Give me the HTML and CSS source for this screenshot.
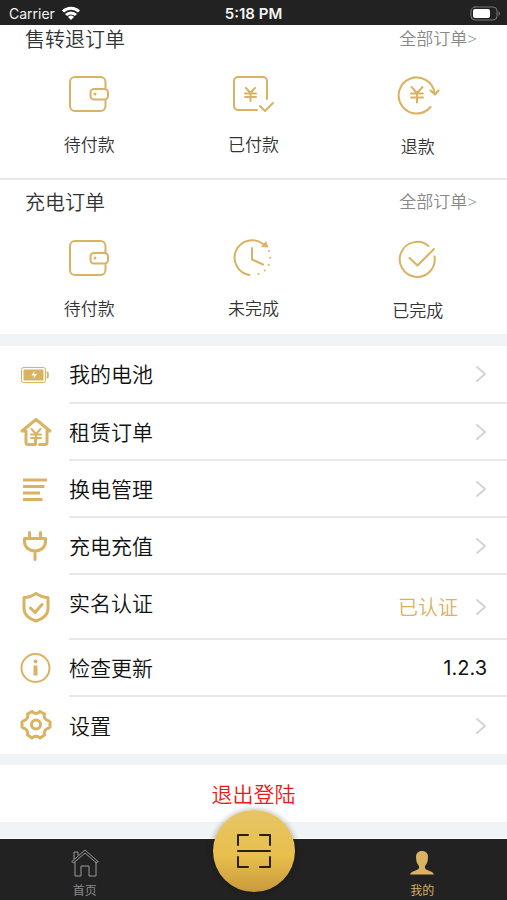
FILE: index.html
```html
<!DOCTYPE html>
<html lang="zh-CN">
<head>
<meta charset="utf-8">
<meta name="viewport" content="width=device-width, initial-scale=1">
<title>我的</title>
<link rel="stylesheet" href="styles.css">
</head>
<body>
<svg class="defs" aria-hidden="true">
  <symbol id="wallet" viewBox="0 0 44 44">
    <path d="M38.500 15V9a5 5 0 0 0-5-5H8a5 5 0 0 0-5 5v24a5 5 0 0 0 5 5h25.500a5 5 0 0 0 5-5v-5"/>
    <rect x="23.500" y="16" width="17.500" height="10.500" rx="3.500"/>
    <circle cx="28" cy="21" r="1.500" class="solid"/>
  </symbol>
  <symbol id="chevron" viewBox="0 0 12 18"><path d="M2 2l8 7-8 7"/></symbol>
</svg>

<header class="status">
  <div class="carrier">
    <span>Carrier</span>
    <svg class="wifi" viewBox="0 0 20 15" aria-hidden="true">
      <path d="M2 5.500a11.500 11.500 0 0 1 16 0M5 9a7 7 0 0 1 10 0"/>
      <path class="dot" d="M10 14l-3-3a4.300 4.300 0 0 1 6 0z"/>
    </svg>
  </div>
  <time class="clock">5:18 PM</time>
  <div class="power">
    <svg viewBox="0 0 32 16" aria-hidden="true">
      <rect class="shell" x="1" y="1" width="26" height="13" rx="4"/>
      <rect class="charge" x="3" y="3" width="17" height="9" rx="2"/>
      <path class="tip" d="M28.500 5a3 3 0 0 1 0 5z"/>
    </svg>
  </div>
</header>

<main>
  <section class="orders">
    <div class="orders-head">
      <h2>售转退订单</h2>
      <a href="#">全部订单<span class="gt">&gt;</span></a>
    </div>
    <div class="orders-grid">
      <a href="#"><svg class="line-icon"><use href="#wallet"/></svg><span>待付款</span></a>
      <a href="#">
        <svg class="line-icon" viewBox="0 0 44 44">
          <path d="M36 26V8a4 4 0 0 0-4-4H7a4 4 0 0 0-4 4v25a4 4 0 0 0 4 4h19M29 33l5 5 8-8"/>
          <path d="M15 15l4.500 5 4.500-5M19.500 20v8M14 20.500h11M14 24h11"/>
        </svg>
        <span>已付款</span>
      </a>
      <a href="#" class="low">
        <svg class="line-icon" viewBox="0 0 44 44">
          <path d="M34.500 34A18 18 0 1 1 38.500 20M34.500 17.500l4.500 4 3.500-4"/>
          <path d="M15.500 14l5.500 6 5.500-6M21 20v9.500M15 20.500h12M15 24.500h12"/>
        </svg>
        <span>退款</span>
      </a>
    </div>
  </section>

  <section class="orders">
    <div class="orders-head">
      <h2>充电订单</h2>
      <a href="#">全部订单<span class="gt">&gt;</span></a>
    </div>
    <div class="orders-grid">
      <a href="#"><svg class="line-icon"><use href="#wallet"/></svg><span>待付款</span></a>
      <a href="#">
        <svg class="line-icon" viewBox="0 0 44 44">
          <path d="M18.500 38A17.500 17.500 0 1 1 32 7M21 11v11.500l11 5"/>
          <path class="solid" d="M30 10l5-6 2.500 6.500z"/>
          <path class="dots" d="M38 14a17.500 17.500 0 0 1-15 24"/>
        </svg>
        <span>未完成</span>
      </a>
      <a href="#" class="low">
        <svg class="line-icon" viewBox="0 0 44 44">
          <path d="M32.500 9A17.500 17.500 0 1 0 38.500 19.500M13.500 21l8 7.500L38 12"/>
        </svg>
        <span>已完成</span>
      </a>
    </div>
  </section>

  <nav class="menu" aria-label="服务">
    <a href="#">
      <svg class="menu-icon" viewBox="0 0 32 32">
        <rect class="thin" x="1.500" y="8.500" width="24" height="15" rx="2"/>
        <rect class="solid" x="3.500" y="10.500" width="20" height="11"/>
        <path class="tip-gold" d="M27.500 13.500q1 2.500 0 5"/>
        <path class="bolt" d="M14.500 12l-3 4.500h2.500l-.5 3.500 3.500-5H14z"/>
      </svg>
      <span class="row"><span class="name">我的电池</span><svg class="chev"><use href="#chevron"/></svg></span>
    </a>
    <a href="#">
      <svg class="menu-icon" viewBox="0 0 32 32">
        <path d="M19.500 27.500H25q2 0 2-2V14h3L16 2.500 2 14h4v11.500q0 2 2 2h7.500V23"/>
        <path class="yen" d="M11.500 12l4.500 5 4.500-5M16 17v7M11 17.500h10M11 21h10"/>
      </svg>
      <span class="row"><span class="name">租赁订单</span><svg class="chev"><use href="#chevron"/></svg></span>
    </a>
    <a href="#">
      <svg class="menu-icon bars" viewBox="0 0 32 32">
        <path d="M3 6h24M3 12.500h21.500M3 19h17M3 25.500h19.500"/>
      </svg>
      <span class="row"><span class="name">换电管理</span><svg class="chev"><use href="#chevron"/></svg></span>
    </a>
    <a href="#">
      <svg class="menu-icon" viewBox="0 0 32 32">
        <path d="M9.500 1.500V7M20.500 1.500V7M4.500 7.500h21v3c0 6-5 9.500-10.500 9.500S4.500 16.500 4.500 10.500zM15 20.500v8"/>
      </svg>
      <span class="row"><span class="name">充电充值</span><svg class="chev"><use href="#chevron"/></svg></span>
    </a>
    <a href="#" class="tall">
      <svg class="menu-icon" viewBox="0 0 32 32">
        <path d="M16 1.500q6 4 12 4V17c0 6-6 10-12 12-6-2-12-6-12-12V5.500q6 0 12-4zM10.500 16l4.500 4.500 7-8"/>
      </svg>
      <span class="row"><span class="name">实名认证</span><span class="verified">已认证</span><svg class="chev"><use href="#chevron"/></svg></span>
    </a>
    <a href="#">
      <svg class="menu-icon ring" viewBox="0 0 32 32">
        <circle cx="15.500" cy="15" r="14"/>
        <path class="stem" d="M15.500 12.500V22.500"/>
        <circle class="solid" cx="15.500" cy="8.500" r="2"/>
      </svg>
      <span class="row"><span class="name">检查更新</span><span class="version">1.2.3</span></span>
    </a>
    <a href="#">
      <svg class="menu-icon" viewBox="0 0 32 32">
        <path d="M12 1.500c2 2.500 6 2.500 8 0l4.500 2.500c-1 3 1 6.500 4.500 7l1 1v5l-1 1c-3.500.5-5.500 4-4.500 7L20 28c-2-2.500-6-2.500-8 0l-4.500-3c1-3-1-6.500-4.500-7l-1-1v-5l1-1c3.500-.5 5.500-4 4.500-7z"/>
        <circle cx="16" cy="14.500" r="4.500"/>
      </svg>
      <span class="row"><span class="name">设置</span><svg class="chev"><use href="#chevron"/></svg></span>
    </a>
  </nav>

  <button class="logout" type="button">退出登陆</button>
</main>

<nav class="tabs" aria-label="主导航">
  <a href="#">
    <svg viewBox="0 0 30 30" class="home">
      <path d="M2 13.500L15 2l13 11.500M4 11V4h4v3M2 13.500l1.500 1.500L15 5l11.500 10 1.500-1.500M5 14v14h6V18h8v10h7V14"/>
    </svg>
    <span>首页</span>
  </a>
  <button class="scan" type="button" aria-label="扫码">
    <svg viewBox="0 0 36 36"><path d="M2 12V2h10M24 2h10v10M2 24v10h10M24 34h10V24M2 18h32"/></svg>
  </button>
  <a href="#" class="active">
    <svg viewBox="0 0 30 30" class="person">
      <path d="M15 3c4 0 6 2.500 6 6 0 4-1 7-3 9v2c1 3 8 2.500 9 6.500H3C4 22.500 11 23 12 20v-2c-2-2-3-5-3-9 0-3.500 2-6 6-6z"/>
    </svg>
    <span>我的</span>
  </a>
</nav>
</body>
</html>
```

FILE: styles.css
```css
* { box-sizing: border-box; }

:root {
  --gold: #d9b262;
  --dark: #222;
  --band: #f1f4f6;
  --rule: #e8e8e8;
}

body {
  margin: 0;
  min-height: 100vh;
  display: flex;
  flex-direction: column;
  background: var(--band);
  color: #111;
  font-family: "Noto Sans CJK SC", sans-serif;
  font-weight: 350;
}

a { color: inherit; text-decoration: none; }
button { border: 0; padding: 0; font: inherit; cursor: pointer; }
svg { display: block; fill: none; stroke-linecap: round; stroke-linejoin: round; }
.defs { position: absolute; width: 0; height: 0; }

.status {
  display: grid;
  grid-template-columns: 1fr auto 1fr;
  align-items: center;
  height: 25px;
  padding: 2px 5px 0 9px;
  background: var(--dark);
  color: #f4f4f4;
  font: 14px/20px Inter, sans-serif;
}
.carrier { display: flex; align-items: center; gap: 6px; }
.wifi { width: 20px; height: 15px; stroke: #fff; stroke-width: 3; stroke-linecap: butt; }
.wifi .dot { fill: #fff; stroke: none; }
.clock { margin-right: 4px; font-size: 15px; font-weight: 600; }
.power { justify-self: end; }
.power svg { width: 32px; height: 16px; }
.shell { stroke: #777; stroke-width: 1; }
.charge { fill: #fff; }
.tip { fill: #777; }

.orders { height: 154px; background: #fff; }
.orders:first-child { height: 155px; border-bottom: 2px solid var(--rule); }
.orders-head {
  display: flex;
  justify-content: space-between;
  padding: 0 30px 0 25px;
}
.orders + .orders .orders-head { padding-top: 8px; }
.orders-head h2 { margin: 0; font-size: 20px; line-height: 28px; font-weight: 350; color: #333; }
.orders-head a { font-size: 17px; line-height: 26px; color: #888; }
.gt { font-family: "Open Sans", sans-serif; font-weight: 300; }
.orders-grid {
  display: grid;
  grid-template-columns: repeat(3, 1fr);
  padding: 20px 7px 0;
}
.orders + .orders .orders-grid { padding-top: 21px; }
.orders-grid a { display: flex; flex-direction: column; align-items: center; gap: 14px; }
.orders-grid .low { gap: 16px; }
.orders-grid span { font-size: 17px; line-height: 26px; color: #333; }
.line-icon { width: 44px; height: 44px; stroke: var(--gold); stroke-width: 2; }
.solid { fill: var(--gold); stroke: none; }
.dots { stroke-dasharray: 0 7; stroke-width: 2; }

.menu { margin-top: 12px; background: #fff; }
.menu a { display: flex; align-items: center; height: 57px; padding-left: 20px; }
.menu a:first-child { height: 58px; }
.menu .tall { height: 65px; }
.menu-icon { width: 32px; height: 32px; margin-right: 17px; stroke: var(--gold); stroke-width: 3; }
.menu-icon .yen { stroke-width: 2; }
.menu-icon.ring { stroke-width: 2; }
.menu-icon .thin { stroke-width: 1; }
.menu-icon.bars { stroke-linecap: butt; }
.menu-icon .solid { stroke: none; }
.menu-icon .tip-gold { stroke-width: 2; }
.menu-icon .stem { stroke-width: 4; stroke-linecap: butt; }
.bolt { fill: #fff; stroke: none; }
.row {
  flex: 1;
  align-self: stretch;
  display: flex;
  align-items: center;
  padding-right: 20px;
  border-bottom: 2px solid var(--rule);
}
.menu a:last-child .row { border-bottom: 0; }
.name { flex: 1; padding-bottom: 2px; font-size: 21px; line-height: 30px; }
.tall .name { padding-bottom: 9px; }
.chev { width: 12px; height: 18px; stroke: #d4d4d4; stroke-width: 2; }
.verified { margin-right: 17px; font-size: 20px; color: var(--gold); }
.version { font: 20px/30px Inter, sans-serif; }

.logout {
  display: block;
  width: 100%;
  height: 57px;
  margin: 11px 0 16px;
  padding-bottom: 2px;
  background: #fff;
  color: #f01818;
  font-size: 21px;
}

.tabs {
  flex: 1;
  display: grid;
  grid-template-columns: 1fr auto 1fr;
  border-top: 1px solid #fff;
  background: var(--dark);
}
.tabs a {
  display: flex;
  flex-direction: column;
  align-items: center;
  padding-top: 9px;
  font-size: 12px;
  font-weight: 400;
  line-height: 18px;
  color: #8b8b8b;
}
.tabs .active { padding-left: 43px; color: var(--gold); }
.tabs a:first-child { padding-right: 43px; }
.tabs a svg { width: 30px; height: 30px; margin-bottom: 3px; }
.home { stroke: #999; stroke-width: 1; }
.person { fill: var(--gold); }
.scan {
  display: grid;
  place-items: center;
  width: 82px;
  height: 82px;
  margin-top: -29px;
  border-radius: 50%;
  background: linear-gradient(#e5c565, #e9bf4d 55%, #c99a3c);
  box-shadow: 0 0 6px rgba(0, 0, 0, .35);
}
.scan svg { width: 36px; height: 36px; stroke: #29210f; stroke-width: 2; }
```
